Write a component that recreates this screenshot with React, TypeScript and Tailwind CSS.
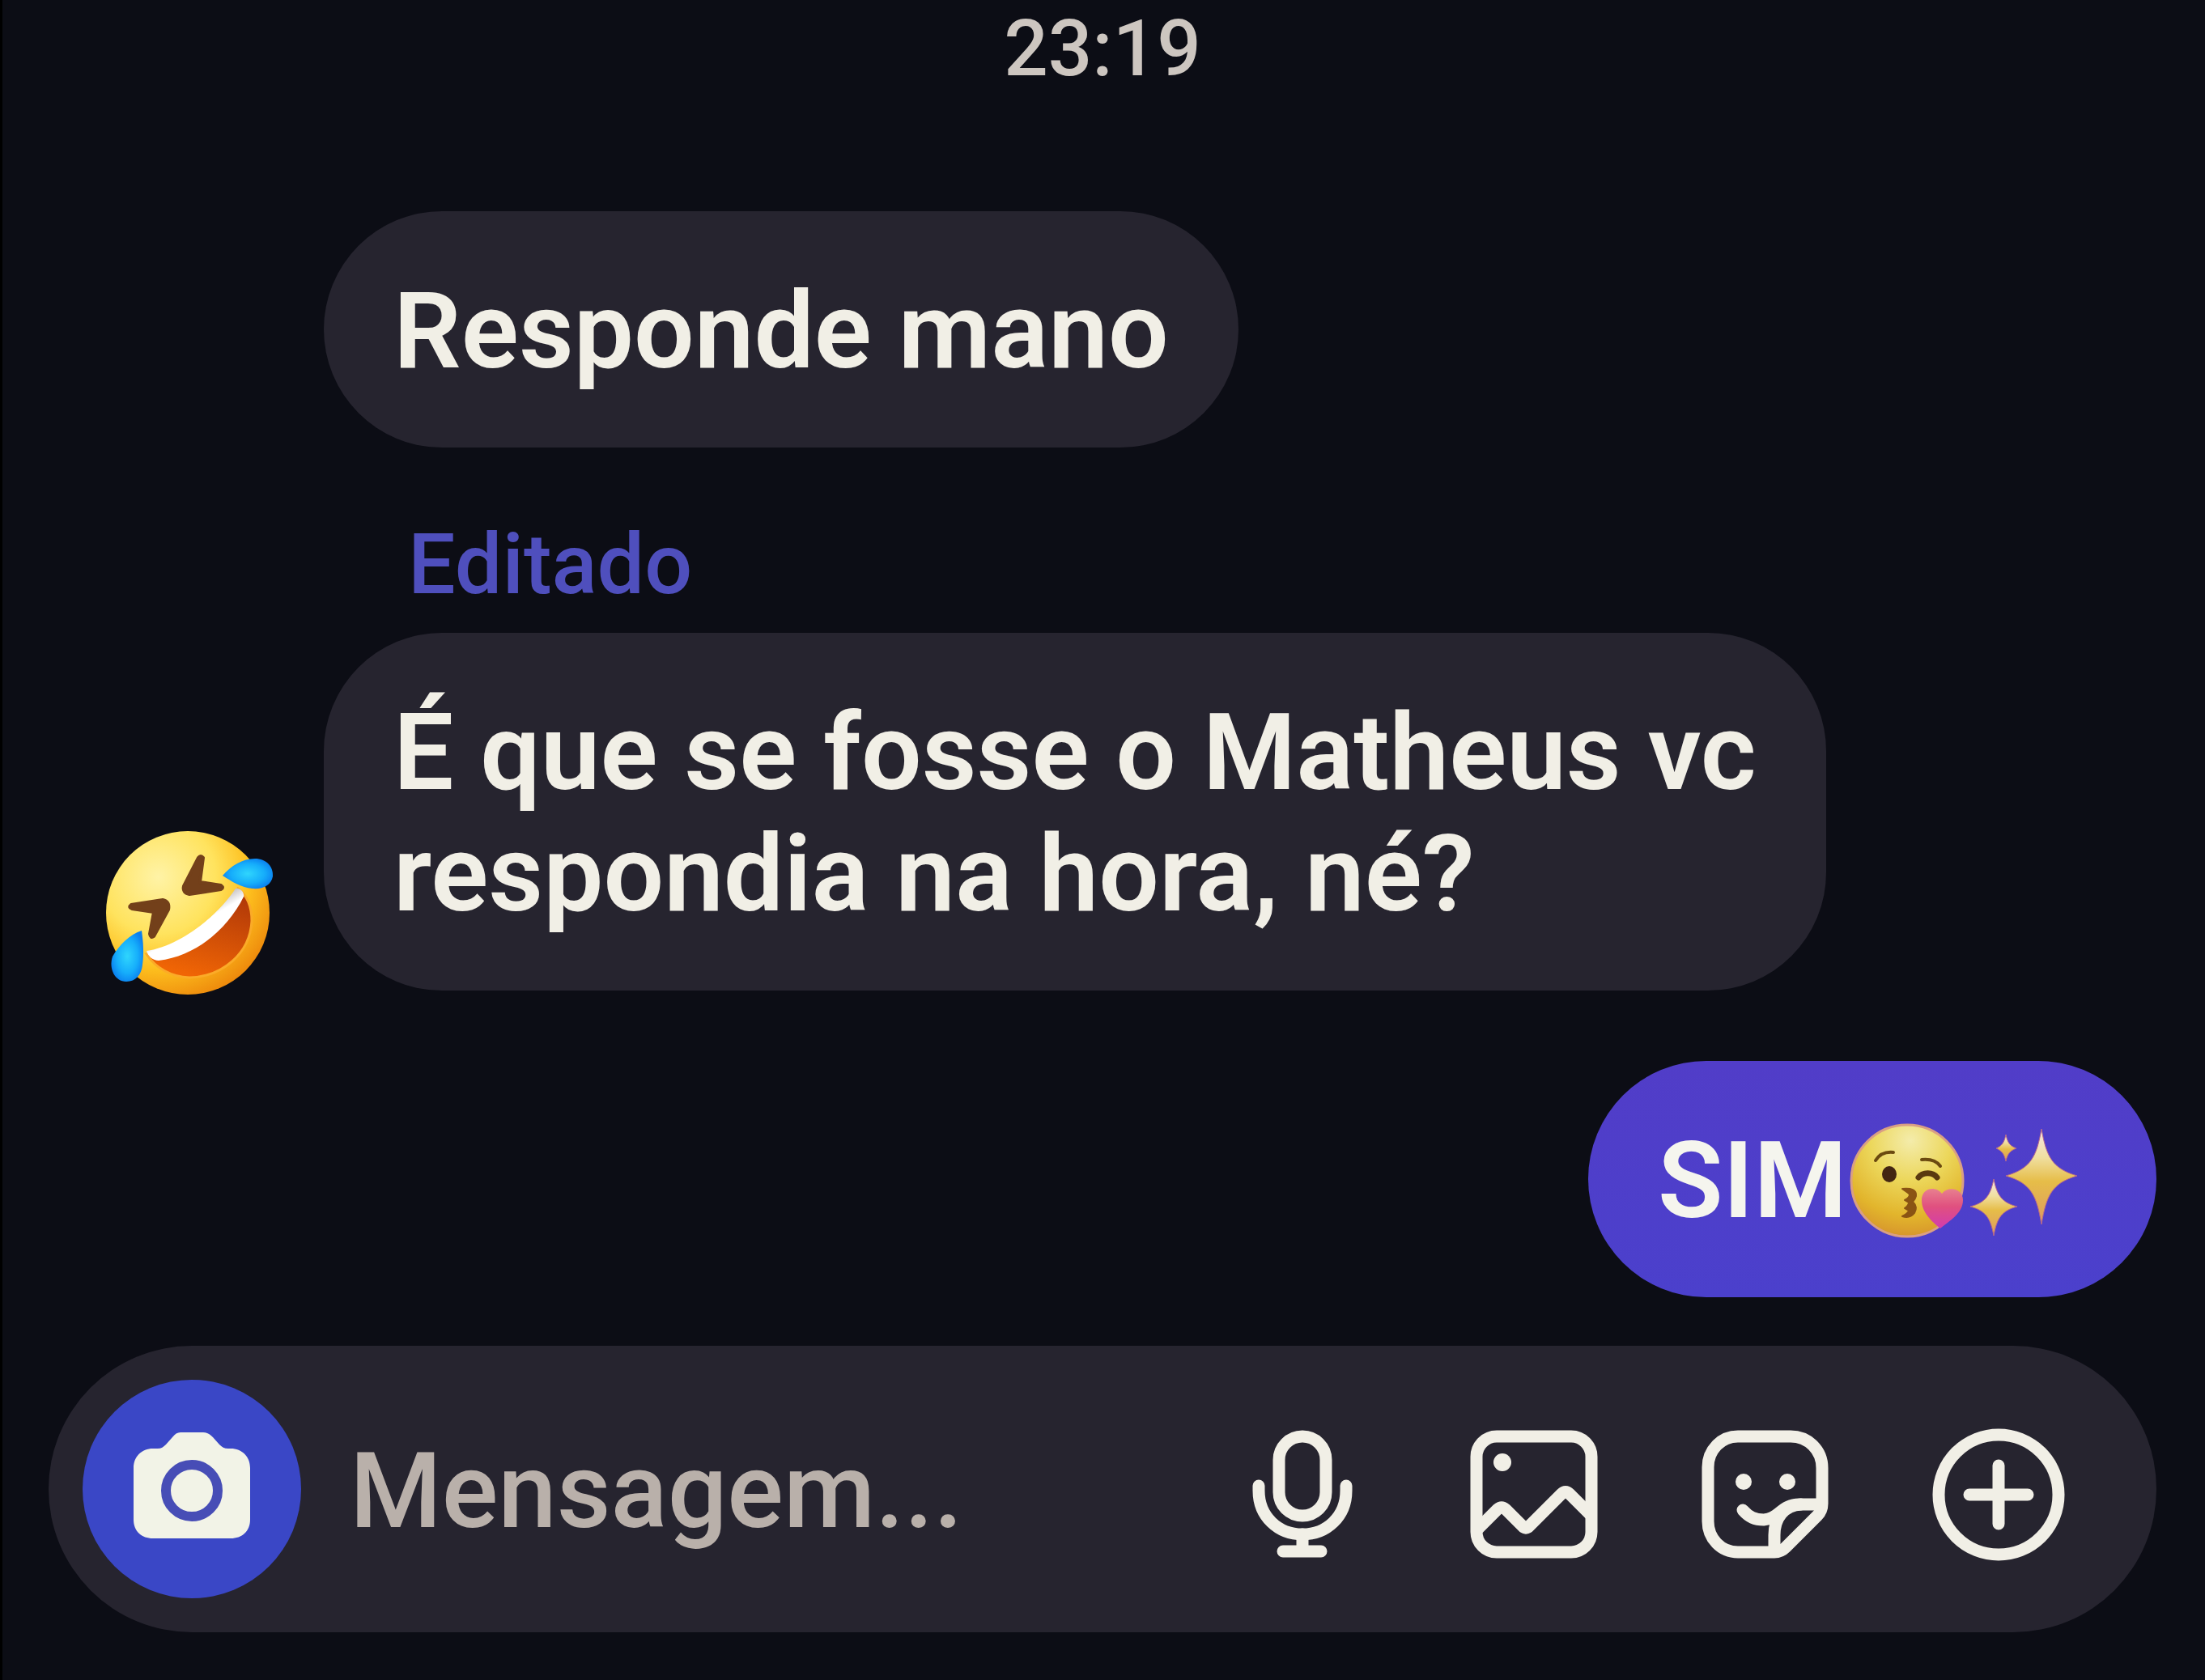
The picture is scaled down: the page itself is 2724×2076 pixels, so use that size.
import type { ReactNode } from "react";

function Bubble({ own, children }: { own?: boolean; children: ReactNode }) {
  return (
    <div
      className={`w-fit rounded-[146px] px-[86px] pt-[73px] pb-[69px] text-[132px] leading-[150px] font-semibold ${
        own ? "bg-linear-to-b from-[#513dc8] to-[#4b40cc] text-[#f5f5ee]" : "bg-[#26242f] text-[#f1efe6]"
      }`}
    >
      {children}
    </div>
  );
}

function LaughingEmoji() {
  return (
    <svg viewBox="0 0 260 260" className="size-[260px]" role="img" aria-label="rolling on the floor laughing">
      <defs>
        <radialGradient id="laugh-face" cx="0.32" cy="0.28" r="0.78">
          <stop offset="0" stopColor="#fff3a6" />
          <stop offset="0.45" stopColor="#ffe35e" />
          <stop offset="0.72" stopColor="#fdbf1e" />
          <stop offset="1" stopColor="#ee8a0c" />
        </radialGradient>
        <linearGradient id="laugh-mouth" x1="0.8" y1="0.1" x2="0.5" y2="1">
          <stop offset="0" stopColor="#b33a08" />
          <stop offset="1" stopColor="#f06505" />
        </linearGradient>
        <linearGradient id="laugh-teeth" x1="0.35" y1="0.4" x2="0.55" y2="0.65">
          <stop offset="0" stopColor="#b9b4b6" />
          <stop offset="0.6" stopColor="#ffffff" />
        </linearGradient>
        <radialGradient id="laugh-tear" cx="0.5" cy="0.5" r="0.55">
          <stop offset="0" stopColor="#2fd5fd" />
          <stop offset="0.6" stopColor="#16aefb" />
          <stop offset="1" stopColor="#0a7ff0" />
        </radialGradient>
      </defs>
      <circle cx="131" cy="128" r="101" fill="url(#laugh-face)" />
      <path d="M80 179C122 177 172 141 193 98C205 107 210 122 210 138C208 178 174 207 133 208C110 207 91 196 80 179Z" fill="url(#laugh-mouth)" stroke="#fbab28" strokeWidth="3" />
      <path d="M80 175C121 169 167 133 190 98C195 97 201 102 200 108C181 147 142 181 95 187C88 187 82 182 80 175Z" fill="url(#laugh-teeth)" />
      <g fill="#73401a" stroke="#73401a" strokeLinejoin="round" strokeWidth="4">
        <path d="M144 60Q147 56 150 60L146 90L172 94Q176 97 172 99L133 105Q124 103 126 95Z" />
        <path d="M61 118L100 112Q109 114 107 124L89 157Q85 160 84 154L89 127L62 123Q57 121 61 118Z" />
      </g>
      <path d="M174 82C184 70 199 61 214 61C228 61 237 71 236 83C234 94 224 99 211 98C197 97 185 89 174 82Z" fill="url(#laugh-tear)" />
      <path d="M74 150C60 154 46 168 38 182C33 197 41 213 55 213C67 213 74 204 75 192C77 179 76 164 74 150Z" fill="url(#laugh-tear)" />
    </svg>
  );
}

function KissEmoji() {
  return (
    <svg viewBox="0 0 148 148" className="size-[148px]" role="img" aria-label="face blowing a kiss">
      <defs>
        <radialGradient id="kiss-face" cx="0.53" cy="0.14" r="0.9">
          <stop offset="0" stopColor="#f4ecab" />
          <stop offset="0.4" stopColor="#ecd75b" />
          <stop offset="0.75" stopColor="#e2b52c" />
          <stop offset="1" stopColor="#d5902c" />
        </radialGradient>
        <linearGradient id="kiss-heart" x1="0" y1="0" x2="0" y2="1">
          <stop offset="0" stopColor="#e8808f" />
          <stop offset="0.45" stopColor="#e0507f" />
          <stop offset="1" stopColor="#d23cae" />
        </linearGradient>
      </defs>
      <circle cx="74" cy="74" r="69" fill="url(#kiss-face)" stroke="#d99f84" strokeWidth="3" />
      <g fill="none" stroke="#6b4a10" strokeWidth="4" strokeLinecap="round">
        <path d="M35 49C40 41 47 38 57 39" />
        <path d="M92 48C102 47 110 49 115 56" />
        <path d="M88 70C93 63 106 63 111 70" strokeWidth="7" stroke="#5a3a10" />
      </g>
      <ellipse cx="52" cy="66" rx="9" ry="10" fill="#432512" />
      <path
        d="M68 84C79 83 86 85 85 93C84 97 82 99 81 100C85 104 86 109 83 114C79 119 74 120 68 118C72 116 75 114 76 111L71 108C74 106 76 104 76 101L71 98C75 96 77 94 77 91C75 88 72 87 68 84Z"
        fill="#8a5414"
        stroke="#8a5414"
        strokeWidth="2"
        strokeLinejoin="round"
      />
      <path d="M115 133C104 124 92 113 92 98C92 82 110 80 117 90C124 80 143 83 143 98C143 114 126 124 115 133Z" fill="url(#kiss-heart)" />
    </svg>
  );
}

function SparklesEmoji() {
  return (
    <svg viewBox="0 0 140 148" className="h-[148px] w-[140px]" role="img" aria-label="sparkles">
      <defs>
        <linearGradient id="sparkle" x1="0" y1="0" x2="0" y2="1">
          <stop offset="0" stopColor="#f6e6e6" />
          <stop offset="0.3" stopColor="#f0dfa0" />
          <stop offset="0.55" stopColor="#e6bd48" />
          <stop offset="1" stopColor="#dd9a63" />
        </linearGradient>
      </defs>
      <g fill="url(#sparkle)" stroke="#b5698c" strokeWidth="1">
        <path d="M92 10C98 44 105 59 136 68C105 77 98 92 92 128C86 92 79 77 48 68C79 59 86 44 92 10Z" />
        <path d="M33 72C37 92 43 101 62 106C43 111 37 120 33 142C29 120 23 111 4 106C23 101 29 92 33 72Z" />
        <path d="M48 17C50 27 53 31 61 34C53 37 50 41 48 50C46 41 43 37 36 34C43 31 46 27 48 17Z" />
      </g>
    </svg>
  );
}

function CameraIcon() {
  return (
    <svg viewBox="0 0 144 132" className="h-[132px] w-36" aria-hidden="true">
      <path
        d="M58 0H86C91 0 95 3 98 6L106 15C109 18 112 20 117 20H120C134 20 144 30 144 44V108C144 122 134 131 120 131H24C10 131 0 122 0 108V44C0 30 10 20 24 20H30C34 20 37 18 40 15L48 6C51 2 54 0 58 0Z"
        fill="#f2f3e7"
      />
      <circle cx="72" cy="72" r="32" fill="none" stroke="#474db6" strokeWidth="12" />
    </svg>
  );
}

function MicIcon() {
  return (
    <svg viewBox="0 0 160 160" className="size-40" fill="none" stroke="currentColor" strokeWidth="15" strokeLinecap="round" aria-hidden="true">
      <rect x="51" y="8" width="58" height="98" rx="29" />
      <path d="M26 69V75C26 107 50 129 80 129C110 129 134 107 134 75V69" />
      <path d="M80 129V150M56 150H103" />
    </svg>
  );
}

function GalleryIcon() {
  return (
    <svg viewBox="0 0 160 160" className="size-40" fill="none" stroke="currentColor" strokeWidth="15" strokeLinejoin="round" aria-hidden="true">
      <rect x="9" y="8" width="142" height="143" rx="25" />
      <path d="M11 122L35 98Q40 94 45 98L67 120Q70 122 73 120L114 79Q119 74 124 79L151 106" />
      <circle cx="41" cy="40" r="11" fill="currentColor" stroke="none" />
    </svg>
  );
}

function StickerIcon() {
  return (
    <svg viewBox="0 0 160 160" className="size-40" fill="none" stroke="currentColor" strokeWidth="15" strokeLinecap="round" strokeLinejoin="round" aria-hidden="true">
      <path d="M46 8H111C133 8 150 25 150 47V91C150 97 148 102 144 106L105 145C101 149 97 151 91 151H46C25 151 9 134 9 113V46C9 25 25 8 46 8Z" />
      <path d="M52 99C60 108 67 111 78 111C97 110 99 92 122 92H148" />
      <path d="M91 146V130C91 109 103 93 124 92" />
      <g fill="currentColor" stroke="none">
        <circle cx="53" cy="64" r="10" />
        <circle cx="107" cy="64" r="10" />
      </g>
    </svg>
  );
}

function PlusIcon() {
  return (
    <svg viewBox="0 0 164 164" className="size-[164px]" fill="none" stroke="currentColor" strokeWidth="15" strokeLinecap="round" aria-hidden="true">
      <circle cx="82" cy="82" r="74" />
      <path d="M82 46V118M46 82H118" />
    </svg>
  );
}

const actions = [
  { label: "Gravar áudio", icon: <MicIcon /> },
  { label: "Galeria", icon: <GalleryIcon /> },
  { label: "Figurinhas", icon: <StickerIcon /> },
  { label: "Mais", icon: <PlusIcon /> },
];

export default function App() {
  return (
    <div className="flex min-h-screen flex-col border-l-3 border-black bg-[#0c0d15] pr-[60px] pl-[57px] font-['Roboto',sans-serif]">
      <time className="pt-[2px] text-center text-[96px] leading-[116px] font-medium text-[#cdc6c0]">23:19</time>

      <main className="flex flex-col pt-[143px]">
        <div className="ml-[340px]">
          <Bubble>Responde mano</Bubble>
        </div>
        <p className="mt-[85px] ml-[444px] text-[104px] leading-[120px] font-medium text-[#4f4fbd]">Editado</p>
        <div className="mt-6 flex items-end">
          <div className="-mb-[36px] ml-[41px] mr-[39px] shrink-0">
            <LaughingEmoji />
          </div>
          <Bubble>
            É que se fosse o Matheus vc
            <br />
            respondia na hora, né?
          </Bubble>
        </div>
        <div className="mt-[87px] flex justify-end">
          <Bubble own>
            <span className="flex items-center pr-2">
              SIM
              <KissEmoji />
              <SparklesEmoji />
            </span>
          </Bubble>
        </div>
      </main>

      <form className="mt-[60px] flex h-[354px] items-center rounded-full bg-[#26242f] pr-[113px] pl-[42px]">
        <button type="button" aria-label="Câmera" className="flex size-[270px] shrink-0 items-center justify-center rounded-full bg-[#3a47c6] pb-2">
          <CameraIcon />
        </button>
        <input
          type="text"
          aria-label="Mensagem"
          placeholder="Mensagem..."
          className="ml-[60px] min-w-0 flex-1 bg-transparent pt-1 text-[130px] font-medium text-[#f1efe6] outline-none placeholder:text-[#b9b0aa]"
        />
        <div className="flex items-center gap-[126px] pt-[14px] text-[#f1efe6]">
          {actions.map((a) => (
            <button key={a.label} type="button" aria-label={a.label}>
              {a.icon}
            </button>
          ))}
        </div>
      </form>
    </div>
  );
}
